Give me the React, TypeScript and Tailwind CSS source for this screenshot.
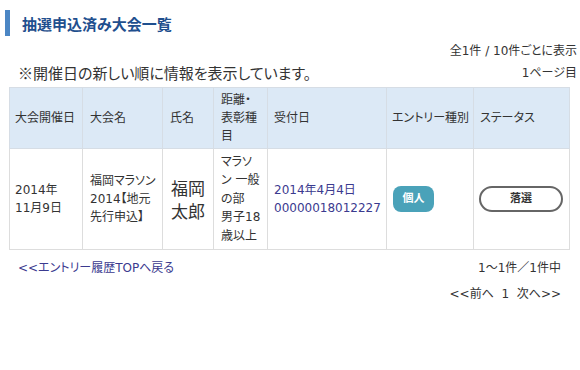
export default function App() {
  const font = {
    fontFamily: '"DejaVu Sans", "Noto Sans CJK JP", sans-serif',
  };
  const cjk = { fontFamily: '"Noto Sans CJK JP", sans-serif' };
  return (
    <div
      className="w-[580px] h-[370px] bg-white text-[#333] overflow-hidden [font-feature-settings:'palt']"
      style={font}
    >
      <div className="pt-[10px] pl-[5px]">
        <div className="h-[26px] border-l-[5px] border-[#4b86c4] pl-[12px] flex items-center">
          <h2 className="text-[15px] font-bold text-[#1f4f8e] leading-none" style={cjk}>
            抽選申込済み大会一覧
          </h2>
        </div>
      </div>

      <div className="mt-[8px] pr-[3px] text-right text-[12px] leading-[14px]">全1件 / 10件ごとに表示</div>
      <div className="flex items-end justify-between pl-[18px] pr-[3px]">
        <p className="text-[15px] leading-[20px] mt-[5px]" style={cjk}>
          ※開催日の新しい順に情報を表示しています。
        </p>
        <span className="text-[12px] leading-[14px] mb-[3px]">1ページ目</span>
      </div>

      <table className="ml-[9px] mt-[4px] w-[560px] table-fixed border-collapse text-[12px] leading-[18px]">
        <colgroup>
          <col className="w-[73px]" />
          <col className="w-[80px]" />
          <col className="w-[51px]" />
          <col className="w-[54px]" />
          <col className="w-[119px]" />
          <col className="w-[87px]" />
          <col className="w-[96px]" />
        </colgroup>
        <thead>
          <tr className="h-[61px] bg-[#dce9f6] text-left">
            <th className="border border-[#d6dde5] px-[5px] font-normal whitespace-nowrap">大会開催日</th>
            <th className="border border-[#d6dde5] px-[7px] font-normal">大会名</th>
            <th className="border border-[#d6dde5] px-[7px] font-normal">氏名</th>
            <th className="border border-[#d6dde5] px-[7px] font-normal">
              距離・
              <br />
              表彰種
              <br />目
            </th>
            <th className="border border-[#d6dde5] px-[6px] font-normal">受付日</th>
            <th className="border border-[#d6dde5] px-[5px] font-normal whitespace-nowrap">エントリー種別</th>
            <th className="border border-[#d6dde5] px-[6px] font-normal">ステータス</th>
          </tr>
        </thead>
        <tbody>
          <tr className="h-[101px]">
            <td className="border border-[#dddddd] px-[5px]">
              2014年
              <br />
              11月9日
            </td>
            <td className="border border-[#dddddd] px-[7px] whitespace-nowrap">
              福岡マラソン
              <br />
              2014【地元
              <br />
              先行申込】
            </td>
            <td className="border border-[#dddddd] text-center text-[17px] leading-[23px]" style={cjk}>
              福岡
              <br />
              太郎
            </td>
            <td className="border border-[#dddddd] px-[7px] leading-[18.5px] whitespace-nowrap">
              マラソ
              <br />
              ン 一般
              <br />
              の部
              <br />
              男子18
              <br />
              歳以上
            </td>
            <td className="border border-[#dddddd] px-[6px] text-[#3b3a8f] whitespace-nowrap">
              2014年4月4日
              <br />
              00000018012227
            </td>
            <td className="border border-[#dddddd] px-[6px]">
              <span className="inline-flex h-[26px] w-[41px] items-center justify-center rounded-[8px] bg-[#4aa2b9] text-[11px] font-bold text-white">
                個人
              </span>
            </td>
            <td className="border border-[#dddddd] pl-[5px]">
              <span className="flex h-[26px] w-[84px] items-center justify-center rounded-full border-2 border-[#666] bg-white text-[11px] font-bold text-[#333]">
                落選
              </span>
            </td>
          </tr>
        </tbody>
      </table>

      <div className="mt-[9px] flex items-center justify-between pl-[18px] pr-[19px] text-[12px] leading-[18px]">
        <a className="text-[#3b3a8f]">&lt;&lt;エントリー履歴TOPへ戻る</a>
        <span>1～1件／1件中</span>
      </div>
      <div className="mt-[8px] pr-[19px] text-right text-[12px] leading-[18px]">
        &lt;&lt;前へ&nbsp;&nbsp;1&nbsp;&nbsp;次へ&gt;&gt;
      </div>
    </div>
  );
}
